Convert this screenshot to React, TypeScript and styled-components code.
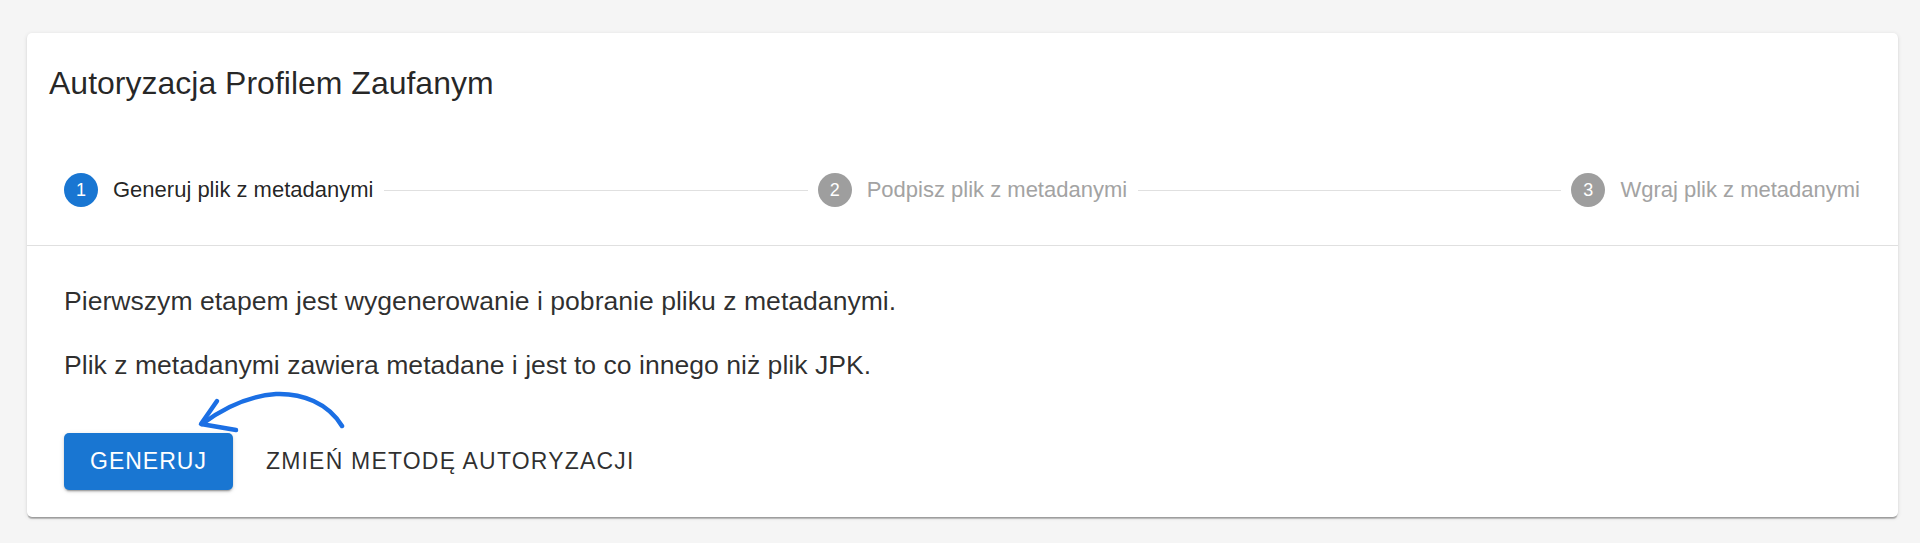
import React from "react";
import styled, { createGlobalStyle } from "styled-components";

const GlobalStyle = createGlobalStyle`
  html, body {
    margin: 0;
    padding: 0;
    background: #f5f5f5;
    font-family: "Liberation Sans", Arial, sans-serif;
  }
  * { box-sizing: border-box; }
`;

const Page = styled.div`
  padding: 33px 22px 26px 27px;
`;

const Card = styled.section`
  background: #fff;
  border-radius: 5px;
  box-shadow: 0px 3px 1px -1px rgba(0, 0, 0, 0.2), 0px 1px 1px 0px rgba(0, 0, 0, 0.14),
    0px 1px 4px 0px rgba(0, 0, 0, 0.12);
  overflow: hidden;
`;

const Header = styled.header`
  padding: 29px 22px 0;
`;

const Title = styled.h2`
  margin: 0;
  font-size: 32px;
  line-height: 42px;
  font-weight: 400;
  color: rgba(0, 0, 0, 0.85);
`;

const Stepper = styled.ol`
  list-style: none;
  margin: 0;
  padding: 70px 27px 39px;
  display: flex;
  align-items: center;
`;

const Step = styled.li`
  display: flex;
  align-items: center;
  padding: 0 11px;
`;

const StepIcon = styled.span<{ $active?: boolean }>`
  width: 34px;
  height: 34px;
  margin: -1px 15px -1px -1px;
  border-radius: 50%;
  background: ${(p) => (p.$active ? "#1976d2" : "#9e9e9e")};
  color: #fff;
  font-size: 18px;
  display: flex;
  align-items: center;
  justify-content: center;
  flex-shrink: 0;
`;

const StepLabel = styled.span<{ $active?: boolean }>`
  font-size: 22px;
  line-height: 30px;
  color: ${(p) => (p.$active ? "rgba(0,0,0,0.87)" : "#a3a3a3")};
  white-space: nowrap;
`;

const Connector = styled.li`
  flex: 1;
  height: 1px;
  background: #e0e0e0;
`;

const Divider = styled.hr`
  margin: 0;
  border: none;
  height: 1px;
  background: #e0e0e0;
`;

const Content = styled.div`
  padding: 35px 37px 27px;
  position: relative;
`;

const Paragraph = styled.p`
  margin: 0 0 24px;
  font-size: 26.6px;
  line-height: 40px;
  color: rgba(0, 0, 0, 0.82);
`;

const Actions = styled.div`
  display: flex;
  align-items: center;
  gap: 18px;
  margin-top: 48px;
  position: relative;
`;

const ContainedButton = styled.button`
  height: 57px;
  padding: 0 26px;
  border: none;
  border-radius: 5px;
  background: #1976d2;
  color: #fff;
  font-family: inherit;
  font-size: 23px;
  letter-spacing: 1px;
  text-transform: uppercase;
  box-shadow: 0px 3px 1px -2px rgba(0, 0, 0, 0.2), 0px 2px 2px 0px rgba(0, 0, 0, 0.14),
    0px 1px 5px 0px rgba(0, 0, 0, 0.12);
  cursor: pointer;
`;

const TextButton = styled.button`
  height: 57px;
  padding: 0 15px;
  border: none;
  background: transparent;
  color: rgba(0, 0, 0, 0.82);
  font-family: inherit;
  font-size: 23px;
  letter-spacing: 1.2px;
  text-transform: uppercase;
  cursor: pointer;
`;

const Arrow = styled.svg`
  position: absolute;
  left: 126px;
  top: -44px;
  width: 160px;
  height: 50px;
  overflow: visible;
`;

const steps = [
  "Generuj plik z metadanymi",
  "Podpisz plik z metadanymi",
  "Wgraj plik z metadanymi",
];

export default function App() {
  return (
    <>
      <GlobalStyle />
      <Page>
        <Card>
          <Header>
            <Title>Autoryzacja Profilem Zaufanym</Title>
          </Header>
          <Stepper>
            {steps.map((label, i) => (
              <React.Fragment key={label}>
                {i > 0 && <Connector />}
                <Step>
                  <StepIcon $active={i === 0}>{i + 1}</StepIcon>
                  <StepLabel $active={i === 0}>{label}</StepLabel>
                </Step>
              </React.Fragment>
            ))}
          </Stepper>
          <Divider />
          <Content>
            <Paragraph>Pierwszym etapem jest wygenerowanie i pobranie pliku z metadanymi.</Paragraph>
            <Paragraph>Plik z metadanymi zawiera metadane i jest to co innego niż plik JPK.</Paragraph>
            <Actions>
              <Arrow viewBox="0 0 160 50">
                <path
                  d="M152 37 C 138 14, 112 4, 86 5 C 58 7, 32 20, 12 35"
                  fill="none"
                  stroke="#1b6fe4"
                  strokeWidth="4.5"
                  strokeLinecap="round"
                />
                <path
                  d="M27 12 L 11 35 L 46 41"
                  fill="none"
                  stroke="#1b6fe4"
                  strokeWidth="4.5"
                  strokeLinecap="round"
                  strokeLinejoin="round"
                />
              </Arrow>
              <ContainedButton>Generuj</ContainedButton>
              <TextButton>Zmień metodę autoryzacji</TextButton>
            </Actions>
          </Content>
        </Card>
      </Page>
    </>
  );
}
